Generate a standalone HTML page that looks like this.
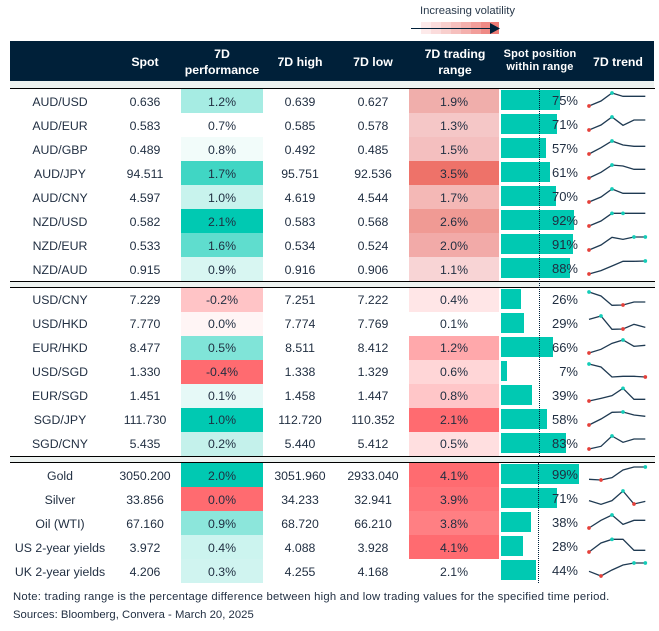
<!DOCTYPE html>
<html><head><meta charset="utf-8"><style>
html,body{margin:0;padding:0;background:#fff}
body{width:659px;height:631px;position:relative;overflow:hidden;font-family:"Liberation Sans",sans-serif;font-size:12.3px;color:#1f2d40}
.a{position:absolute}
.r{position:absolute;left:0;width:659px;height:24px}
.b1 .r span{line-height:27px}.b2 .r span{line-height:25px}.b3 .r span{line-height:26px}
.r span{position:absolute;top:0;height:24px;text-align:center;white-space:nowrap;overflow:visible}
.n{left:10px;width:100px}.s{left:105px;width:80px}.p{left:181px;width:82px}.h{left:260px;width:80px}.l{left:333px;width:80px}.g{left:409px;width:90px}
.r i{position:absolute;left:501px;height:20px;background:#00c9b2;top:1px}
.b1 .r b,.b2 .r b,.b3 .r b{position:absolute;font-weight:normal;right:81px;font-size:13px;z-index:5;line-height:24px;top:0}
.th{position:absolute;color:#fff;font-weight:bold;text-align:center;font-size:12.3px;line-height:16px;white-space:nowrap}
.ln{position:absolute;left:10px;width:645px;height:1.4px;background:#000}
</style></head><body>
<div class="a" style="left:420px;top:4px;font-size:11.3px;line-height:14px;letter-spacing:-.02px;color:#2a3a4c;white-space:nowrap">Increasing volatility</div>
<div class="a" style="left:421px;top:22px;height:12px;width:78px;background:linear-gradient(90deg,#fdeaea 0 10px,#fbdcdc 10px 20px,#f8cfcd 20px 30px,#f6c0be 30px 40px,#f4b0ad 40px 50px,#f29e9a 50px 60px,#ef8a85 60px 70px,#ee7c76 70px)"></div>
<div class="a" style="left:411px;top:28px;height:1.2px;width:80px;background:#002039"></div>
<svg class="a" style="left:489px;top:23px" width="12" height="11"><polygon points="1,0 11,5.5 1,11" fill="#002039"/></svg>

<div class="a" style="left:10px;top:41px;width:644px;height:40px;background:#002039"></div>
<div class="th" style="left:105px;width:80px;top:54px">Spot</div>
<div class="th" style="left:181px;width:82px;top:46px">7D<br>performance</div>
<div class="th" style="left:260px;width:80px;top:54px">7D high</div>
<div class="th" style="left:333px;width:80px;top:54px">7D low</div>
<div class="th" style="left:410px;width:90px;top:46px">7D trading<br>range</div>
<div class="th" style="left:495px;width:90px;top:48px;font-size:11px;line-height:13px;letter-spacing:.2px">Spot position<br>within range</div>
<div class="th" style="left:578px;width:80px;top:54px">7D trend</div>

<div class="a" style="left:10px;top:81px;width:644px;height:7px;background:#edf2f0"></div>
<div class="a" style="left:10px;top:281px;width:645px;height:6px;background:#edf2f0"></div>
<div class="a" style="left:10px;top:456px;width:645px;height:6px;background:#edf2f0"></div>

<div class="b1">
<div class="r" style="top:89px"><span class="n">AUD/USD</span><span class="s">0.636</span><span class="p" style="background:#a6ece3">1.2%</span><span class="h">0.639</span><span class="l">0.627</span><span class="g" style="background:#f0aeab">1.9%</span><i style="width:59px"></i><b style="top:0">75%</b></div>
<div class="r" style="top:113px"><span class="n">AUD/EUR</span><span class="s">0.583</span><span class="p">0.7%</span><span class="h">0.585</span><span class="l">0.578</span><span class="g" style="background:#f5c7c7">1.3%</span><i style="width:56px"></i><b>71%</b></div>
<div class="r" style="top:137px"><span class="n">AUD/GBP</span><span class="s">0.489</span><span class="p" style="background:#f2fcfa">0.8%</span><span class="h">0.492</span><span class="l">0.485</span><span class="g" style="background:#f4bfbf">1.5%</span><i style="width:45px"></i><b>57%</b></div>
<div class="r" style="top:161px"><span class="n">AUD/JPY</span><span class="s">94.511</span><span class="p" style="background:#40d6c4">1.7%</span><span class="h">95.751</span><span class="l">92.536</span><span class="g" style="background:#ee7269">3.5%</span><i style="width:49px"></i><b>61%</b></div>
<div class="r" style="top:185px"><span class="n">AUD/CNY</span><span class="s">4.597</span><span class="p" style="background:#c8f3ed">1.0%</span><span class="h">4.619</span><span class="l">4.544</span><span class="g" style="background:#f4b8b6">1.7%</span><i style="width:55px"></i><b>70%</b></div>
<div class="r" style="top:209px"><span class="n">NZD/USD</span><span class="s">0.582</span><span class="p" style="background:#00c9b2">2.1%</span><span class="h">0.583</span><span class="l">0.568</span><span class="g" style="background:#f09a94">2.6%</span><i style="width:73px"></i><b>92%</b></div>
<div class="r" style="top:233px"><span class="n">NZD/EUR</span><span class="s">0.533</span><span class="p" style="background:#5fddce">1.6%</span><span class="h">0.534</span><span class="l">0.524</span><span class="g" style="background:#f2aaa8">2.0%</span><i style="width:72px"></i><b>91%</b></div>
<div class="r" style="top:257px"><span class="n">NZD/AUD</span><span class="s">0.915</span><span class="p" style="background:#d8f6f2">0.9%</span><span class="h">0.916</span><span class="l">0.906</span><span class="g" style="background:#f8d4d5">1.1%</span><i style="width:69px"></i><b>88%</b></div>
</div>

<div class="b2">
<div class="r" style="top:288px"><span class="n">USD/CNY</span><span class="s">7.229</span><span class="p" style="background:#ffc4c6">-0.2%</span><span class="h">7.251</span><span class="l">7.222</span><span class="g" style="background:#ffe6e7">0.4%</span><i style="width:20px"></i><b>26%</b></div>
<div class="r" style="top:312px"><span class="n">USD/HKD</span><span class="s">7.770</span><span class="p" style="background:#fff5f5">0.0%</span><span class="h">7.774</span><span class="l">7.769</span><span class="g">0.1%</span><i style="width:23px"></i><b>29%</b></div>
<div class="r" style="top:336px"><span class="n">EUR/HKD</span><span class="s">8.477</span><span class="p" style="background:#80e4d8">0.5%</span><span class="h">8.511</span><span class="l">8.412</span><span class="g" style="background:#ffa8ab">1.2%</span><i style="width:52px"></i><b>66%</b></div>
<div class="r" style="top:360px"><span class="n">USD/SGD</span><span class="s">1.330</span><span class="p" style="background:#ff6b70">-0.4%</span><span class="h">1.338</span><span class="l">1.329</span><span class="g" style="background:#ffd6d7">0.6%</span><i style="width:6px"></i><b>7%</b></div>
<div class="r" style="top:384px"><span class="n">EUR/SGD</span><span class="s">1.451</span><span class="p" style="background:#e6f9f7">0.1%</span><span class="h">1.458</span><span class="l">1.447</span><span class="g" style="background:#ffc6c8">0.8%</span><i style="width:31px"></i><b>39%</b></div>
<div class="r" style="top:408px"><span class="n">SGD/JPY</span><span class="s">111.730</span><span class="p" style="background:#00c9b2">1.0%</span><span class="h">112.720</span><span class="l">110.352</span><span class="g" style="background:#ff6b70">2.1%</span><i style="width:46px"></i><b>58%</b></div>
<div class="r" style="top:432px"><span class="n">SGD/CNY</span><span class="s">5.435</span><span class="p" style="background:#c4f1eb">0.2%</span><span class="h">5.440</span><span class="l">5.412</span><span class="g" style="background:#ffdfe0">0.5%</span><i style="width:65px"></i><b>83%</b></div>
</div>

<div class="b3">
<div class="r" style="top:463px"><span class="n">Gold</span><span class="s">3050.200</span><span class="p" style="background:#00c9b2">2.0%</span><span class="h">3051.960</span><span class="l">2933.040</span><span class="g" style="background:#ff6b70">4.1%</span><i style="width:78px"></i><b>99%</b></div>
<div class="r" style="top:487px"><span class="n">Silver</span><span class="s">33.856</span><span class="p" style="background:#ff6b70">0.0%</span><span class="h">34.233</span><span class="l">32.941</span><span class="g" style="background:#ff7378">3.9%</span><i style="width:56px"></i><b>71%</b></div>
<div class="r" style="top:511px"><span class="n">Oil (WTI)</span><span class="s">67.160</span><span class="p" style="background:#8ce6db">0.9%</span><span class="h">68.720</span><span class="l">66.210</span><span class="g" style="background:#ff7f83">3.8%</span><i style="width:30px"></i><b>38%</b></div>
<div class="r" style="top:535px"><span class="n">US 2-year yields</span><span class="s">3.972</span><span class="p" style="background:#ccf4ef">0.4%</span><span class="h">4.088</span><span class="l">3.928</span><span class="g" style="background:#ff6b70">4.1%</span><i style="width:22px"></i><b>28%</b></div>
<div class="r" style="top:559px"><span class="n">UK 2-year yields</span><span class="s">4.206</span><span class="p" style="background:#d0f4f0">0.3%</span><span class="h">4.255</span><span class="l">4.168</span><span class="g">2.1%</span><i style="width:35px"></i><b>44%</b></div>
</div>

<div class="ln" style="top:88px"></div>
<div class="ln" style="top:280.5px"></div>
<div class="ln" style="top:287px"></div>
<div class="ln" style="top:455.5px"></div>
<div class="ln" style="top:462px"></div>

<div class="a" style="left:539px;top:89px;height:367px;border-left:1px dotted #002039"></div>
<div class="a" style="left:538px;top:463px;height:120px;border-left:1px dotted #002039"></div>

<svg class="a" style="left:0;top:0" width="659" height="631" viewBox="0 0 659 631">
<style>polyline{fill:none;stroke:#1f3a52;stroke-width:3.9}.t{fill:#14cdb8}.d{fill:#e5403a}</style>
<g transform="translate(490,85) scale(.3333)">
<polyline points="297,63 333,48 366,24 399,34 432,34 466,34"/><circle class="d" cx="297" cy="63" r="5.5"/><circle class="t" cx="366" cy="24" r="5.5"/>
<polyline points="297,135 333,120 366,96 399,121 432,105 466,105"/><circle class="d" cx="297" cy="135" r="5.5"/><circle class="t" cx="366" cy="96" r="5.5"/>
<polyline points="297,207 333,188 366,168 399,180 432,184 466,184"/><circle class="d" cx="297" cy="207" r="5.5"/><circle class="t" cx="366" cy="168" r="5.5"/>
<polyline points="297,279 333,262 366,240 399,243 432,253 466,253"/><circle class="d" cx="297" cy="279" r="5.5"/><circle class="t" cx="366" cy="240" r="5.5"/>
</g>
<g transform="translate(490,185) scale(.3333)">
<polyline points="297,51 333,36 366,12 399,25 432,25 466,25"/><circle class="d" cx="297" cy="51" r="5.5"/><circle class="t" cx="366" cy="12" r="5.5"/>
<polyline points="297,123 333,108 366,85 399,85 432,85 466,85"/><circle class="d" cx="297" cy="123" r="5.5"/><circle class="t" cx="366" cy="85" r="5.5"/><circle class="t" cx="399" cy="85" r="5.5"/>
<polyline points="297,195 333,180 366,157 399,163 432,156 466,156"/><circle class="d" cx="297" cy="195" r="5.5"/><circle class="t" cx="432" cy="156" r="5.5"/><circle class="t" cx="466" cy="156" r="5.5"/>
<polyline points="297,267 333,257 366,243 399,229 432,229 466,228"/><circle class="d" cx="297" cy="267" r="5.5"/><circle class="t" cx="466" cy="228" r="5.5"/>
</g>
<g transform="translate(490,285) scale(.3333)">
<polyline points="297,21 333,33 366,61 399,60 432,51 466,51"/><circle class="t" cx="297" cy="21" r="5.5"/><circle class="d" cx="399" cy="60" r="5.5"/>
<polyline points="297,103 333,93 366,133 399,132 432,118 466,127"/><circle class="t" cx="333" cy="93" r="5.5"/><circle class="d" cx="399" cy="132" r="5.5"/>
<polyline points="297,204 333,193 366,175 399,165 432,184 466,181"/><circle class="d" cx="297" cy="204" r="5.5"/><circle class="t" cx="399" cy="165" r="5.5"/>
<polyline points="297,237 333,246 366,276 399,274 432,274 466,276"/><circle class="t" cx="297" cy="237" r="5.5"/><circle class="d" cx="466" cy="276" r="5.5"/>
</g>
<g transform="translate(490,385) scale(.3333)">
<polyline points="297,48 333,40 366,32 399,10 432,43 466,43"/><circle class="d" cx="297" cy="48" r="5.5"/><circle class="t" cx="399" cy="10" r="5.5"/>
<polyline points="297,120 333,102 366,82 399,81 432,90 466,94"/><circle class="d" cx="297" cy="120" r="5.5"/><circle class="t" cx="399" cy="81" r="5.5"/>
<polyline points="297,192 333,184 366,153 399,172 432,162 466,162"/><circle class="d" cx="297" cy="192" r="5.5"/><circle class="t" cx="366" cy="153" r="5.5"/>
</g>
<g transform="translate(490,455) scale(.3333)">
<polyline points="297,73 333,75 366,68 399,45 432,36 466,36"/><circle class="d" cx="333" cy="75" r="5.5"/><circle class="t" cx="466" cy="36" r="5.5"/>
<polyline points="297,137 333,148 366,137 399,108 432,147 466,139"/><circle class="t" cx="399" cy="108" r="5.5"/><circle class="d" cx="432" cy="147" r="5.5"/>
<polyline points="297,219 333,196 366,180 399,208 432,196 466,196"/><circle class="d" cx="297" cy="219" r="5.5"/><circle class="t" cx="366" cy="180" r="5.5"/>
<polyline points="297,291 333,264 366,253 399,253 432,286 466,286"/><circle class="d" cx="297" cy="291" r="5.5"/><circle class="t" cx="366" cy="253" r="5.5"/>
<polyline points="297,349 333,363 366,345 399,330 432,324 466,324"/><circle class="d" cx="333" cy="363" r="5.5"/><circle class="t" cx="432" cy="324" r="5.5"/><circle class="t" cx="466" cy="324" r="5.5"/>
</g>
</svg>

<div class="a" style="left:13px;top:590px;font-size:11.3px;line-height:14px;letter-spacing:.23px;white-space:nowrap">Note: trading range is the percentage difference between high and low trading values for the specified time period.</div>
<div class="a" style="left:13px;top:608px;font-size:11.3px;line-height:14px;letter-spacing:.02px;white-space:nowrap">Sources: Bloomberg, Convera - March 20, 2025</div>
</body></html>
